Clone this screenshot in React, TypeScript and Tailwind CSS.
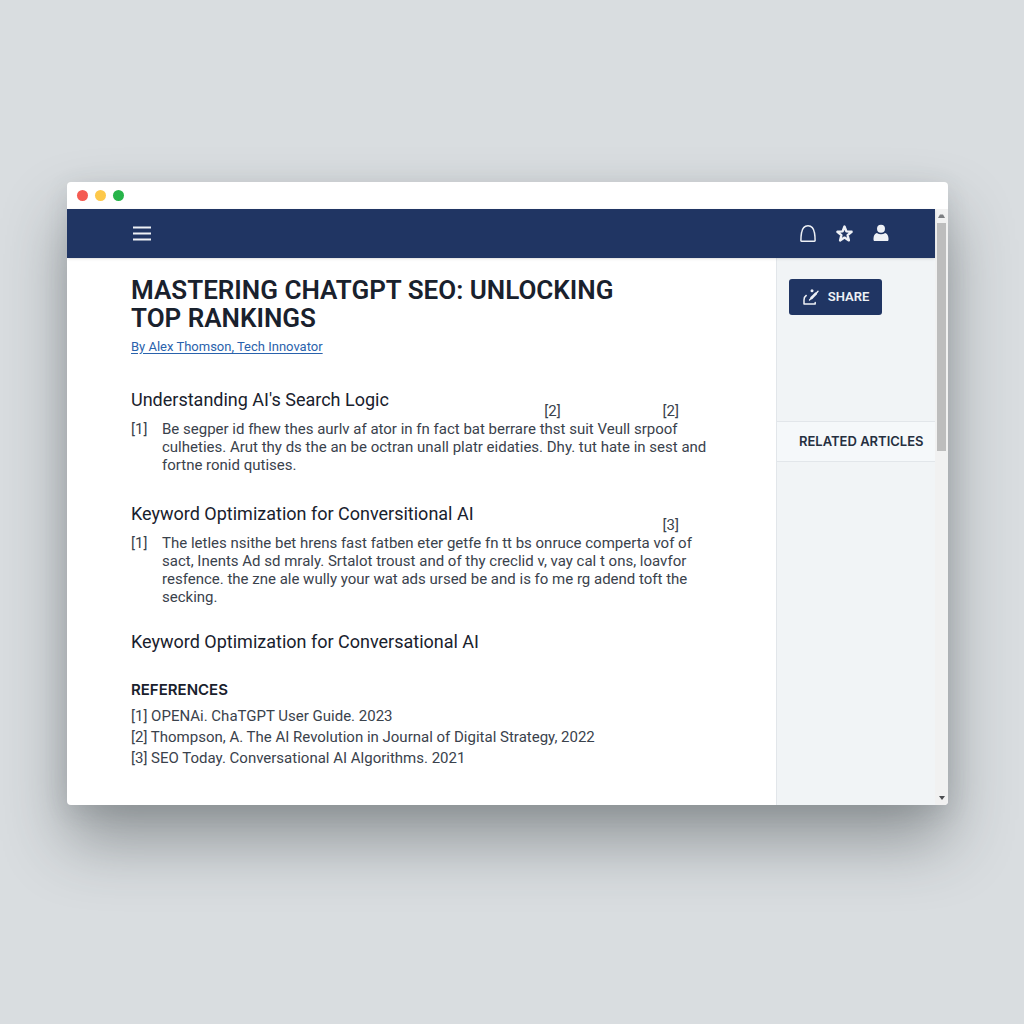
import React from "react";

const sections = [
  {
    title: "Understanding AI's Search Logic",
    marks: ["[2]", "[2]"],
    lines: [
      "Be segper id fhew thes aurlv af ator in fn fact bat berrare thst suit Veull srpoof",
      "culheties. Arut thy ds the an be octran unall platr eidaties. Dhy. tut hate in sest and",
      "fortne ronid qutises.",
    ],
  },
  {
    title: "Keyword Optimization for Conversitional AI",
    marks: ["[3]"],
    lines: [
      "The letles nsithe bet hrens fast fatben eter getfe fn tt bs onruce comperta vof of",
      "sact, Inents Ad sd mraly. Srtalot troust and of thy creclid v, vay cal t ons, loavfor",
      "resfence. the zne ale wully your wat ads ursed be and is fo me rg adend toft the",
      "secking.",
    ],
  },
];

const references = [
  "[1] OPENAi. ChaTGPT User Guide. 2023",
  "[2] Thompson, A. The AI Revolution in Journal of Digital Strategy, 2022",
  "[3] SEO Today. Conversational AI Algorithms. 2021",
];

const MenuIcon = () => (
  <svg width="20" height="16" viewBox="0 0 20 16" stroke="#eef1f6" strokeWidth="1.8">
    <path d="M1 1.500h18M1 7.500h18M1 13.500h18" />
  </svg>
);

const BellIcon = () => (
  <svg width="20" height="20" viewBox="0 0 20 20" fill="none" stroke="#eef1f6" strokeWidth="1.5">
    <path d="M2.500 17.200c-.4 0-.6-.3-.6-.7 0-2.500.2-5.300.6-7.500C3.200 4.500 5.600 1.800 9 1.800s5.800 2.700 6.500 7.200c.4 2.200.6 5 .6 7.500 0 .4-.2.7-.6.7z" />
  </svg>
);

const StarIcon = () => (
  <svg width="20" height="20" viewBox="0 0 20 20">
    <path
      fill="none"
      stroke="#eef1f6"
      strokeWidth="2.4"
      strokeLinejoin="round"
      d="M9.500 2.500l1.900 4.900 5.200.4-4 3.400 1.300 5.200-4.400-2.800-4.400 2.800 1.300-5.200-4-3.400 5.200-.4z"
    />
  </svg>
);

const UserIcon = () => (
  <svg width="20" height="20" viewBox="0 0 20 20" fill="#eef1f6">
    <circle cx="10" cy="4.800" r="4" />
    <path d="M5.800 9c1.300.9 2.700 1.300 4.200 1.300s2.900-.4 4.200-1.300c2.100.7 3.300 2.900 3.300 5.500v1c0 1-.5 1.500-1.500 1.500H4c-1 0-1.500-.5-1.500-1.500v-1c0-2.600 1.200-4.800 3.300-5.500z" />
  </svg>
);

const ShareIcon = () => (
  <svg width="18" height="18" viewBox="0 0 18 18" fill="none" stroke="#eef1f6" strokeLinecap="round">
    <path d="M4.200 7.500C2.600 8.500 2 10 2 12v4h11.200v-1.500" strokeWidth="1.500" strokeLinejoin="round" />
    <path d="M9.500 10l4.300-4.300" strokeWidth="2.600" />
    <path d="M7.500 12l2-2M13.800 5.700l2.200-2.400" strokeWidth="1.400" />
    <circle cx="10" cy="2.800" r="1.500" fill="#eef1f6" stroke="none" />
  </svg>
);

const Scrollbar = () => (
  <div className="flex w-[13px] shrink-0 flex-col items-center bg-[#f1f1f1]">
    <svg className="mt-1 mb-1" width="7" height="6" viewBox="0 0 7 6" fill="#7d7f82">
      <path d="M0 5h7L5 1.500H2z" />
    </svg>
    <div className="h-[228px] w-[9px] bg-[#bdbdbd]" />
    <svg className="mt-auto mb-1" width="6" height="6" viewBox="0 0 6 6" fill="#4b4d50">
      <path d="M0 1h6L3 5z" />
    </svg>
  </div>
);

export default function App() {
  return (
    <div className="min-h-screen bg-[#d9dde0] pt-[182px] pr-[76px] pb-20 pl-[67px] font-[Roboto,sans-serif] text-[#3a424c]">
      <div className="overflow-hidden rounded bg-white shadow-[0_36px_64px_rgba(45,52,56,0.42),0_6px_24px_rgba(60,68,74,0.12)]">
        {/* Title bar */}
        <div className="flex h-[27px] items-center gap-[7px] px-[10px]">
          <span className="size-[11px] rounded-full bg-[#f45b52]" />
          <span className="size-[11px] rounded-full bg-[#fdc84a]" />
          <span className="size-[11px] rounded-full bg-[#27b44a]" />
        </div>

        <div className="flex">
          <div className="min-w-0 flex-1">
            {/* Navigation */}
            <nav className="relative flex h-[49px] items-center justify-between bg-[#203563] pr-11 pl-[65px] shadow-sm">
              <button type="button" aria-label="Menu">
                <MenuIcon />
              </button>
              <div className="flex items-center gap-4">
                <button type="button" aria-label="Notifications">
                  <BellIcon />
                </button>
                <button type="button" aria-label="Favorites">
                  <StarIcon />
                </button>
                <button type="button" aria-label="Account">
                  <UserIcon />
                </button>
              </div>
            </nav>

            <div className="flex">
              <main className="min-w-0 flex-1 px-16 pt-[18px] pb-9">
                <h1 className="text-[26px] leading-7 font-semibold text-[#19212d]">
                  MASTERING CHATGPT SEO: UNLOCKING
                  <br />
                  TOP RANKINGS
                </h1>
                <a href="#author" className="mt-[6px] block text-[13px] leading-[18px] text-[#2a62ac] underline underline-offset-2">
                  By Alex Thomson, Tech Innovator
                </a>

                {sections.map((section) => (
                  <section key={section.title} className="mt-7 first-of-type:mt-8">
                    <div className="flex h-8 max-w-[566px] justify-between pr-[18px]">
                      <h2 className="text-[18px] leading-6 text-[#19212d]">{section.title}</h2>
                      <div className="flex items-end gap-[102px] text-[15px] leading-[18px]">
                        {section.marks.map((mark, i) => (
                          <span key={i}>{mark}</span>
                        ))}
                      </div>
                    </div>
                    <div className="flex text-[15px] leading-[18px]">
                      <span className="w-[31px] shrink-0">[1]</span>
                      <p className="whitespace-nowrap">
                        {section.lines.map((line) => (
                          <span key={line} className="block">
                            {line}
                          </span>
                        ))}
                      </p>
                    </div>
                  </section>
                ))}

                <h2 className="mt-6 text-[18px] leading-6 text-[#19212d]">
                  Keyword Optimization for Conversational AI
                </h2>

                <h3 className="mt-6 font-[Inter,sans-serif] text-[15px] leading-6 font-semibold text-[#19212d]">
                  REFERENCES
                </h3>
                <ul className="mt-1 text-[15px] leading-[21px]">
                  {references.map((reference) => (
                    <li key={reference}>{reference}</li>
                  ))}
                </ul>
              </main>

              {/* Sidebar */}
              <aside className="w-[159px] shrink-0 border-l border-[#e2e6ea] bg-[#f1f4f6]">
                <div className="px-3 pt-[21px]">
                  <button
                    type="button"
                    className="flex h-9 w-[93px] items-center justify-center gap-2 rounded-[3px] bg-[#203563] text-[13px] font-semibold text-[#eef1f6]"
                  >
                    <ShareIcon />
                    SHARE
                  </button>
                </div>
                <h3 className="mt-[106px] border-y border-[#e2e6ea] bg-[#f5f8fa] pl-[22px] font-[Inter,sans-serif] text-[13px] leading-[39px] font-semibold whitespace-nowrap text-[#252f3f]">
                  RELATED ARTICLES
                </h3>
              </aside>
            </div>
          </div>
          <Scrollbar />
        </div>
      </div>
    </div>
  );
}
